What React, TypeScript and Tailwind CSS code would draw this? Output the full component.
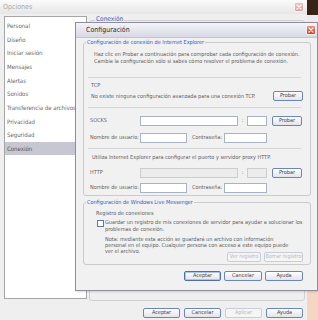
import React from "react";

type BtnProps = { label: string; w: string; disabled?: boolean; def?: boolean };

function Btn({ label, w, disabled = false, def = false }: BtnProps) {
  const base =
    "flex items-center justify-center h-[10px] rounded-[2px] border text-[5.5px] leading-none shrink-0 whitespace-nowrap ";
  const look = disabled
    ? "border-[#c9cdd6] bg-[#f5f5f5] text-[#b8b8b8]"
    : def
    ? "border-[#4f6fa8] bg-linear-to-b from-[#ffffff] to-[#e3e3ea] text-[#444] shadow-[inset_0_0_0_1px_#a9c6f2]"
    : "border-[#6a86b8] bg-linear-to-b from-[#ffffff] to-[#e3e3ea] text-[#444]";
  return <div className={base + w + " " + look}>{label}</div>;
}

function Input({ w, disabled = false }: { w: string; disabled?: boolean }) {
  return (
    <div
      className={
        "h-[10px] border shrink-0 " +
        w +
        (disabled ? " bg-[#ececec] border-[#cdcdcd]" : " bg-white border-[#aab3c4]")
      }
    />
  );
}

function Sep() {
  return <div className="h-px bg-[#d6d6d6] ml-[-2px] mr-[2px]" />;
}

function CloseX({ active }: { active: boolean }) {
  return (
    <div
      className={
        "w-[10px] h-[10px] rounded-[2px] flex items-center justify-center border " +
        (active
          ? "bg-linear-to-b from-[#ef8a74] to-[#cf3a22] border-[#f4f4f4]"
          : "bg-linear-to-b from-[#f1c0bc] to-[#e49c96] border-[#f6f6f6]")
      }
    >
      <svg width="6" height="6" viewBox="0 0 6 6">
        <path d="M1 1 L5 5 M5 1 L1 5" stroke="#ffffff" strokeWidth="1.2" strokeLinecap="round" />
      </svg>
    </div>
  );
}

const items = [
  "Personal",
  "Diseño",
  "Iniciar sesión",
  "Mensajes",
  "Alertas",
  "Sonidos",
  "Transferencia de archivos",
  "Privacidad",
  "Seguridad",
  "Conexión",
];

function UserRow({ mt }: { mt: string }) {
  return (
    <div className={mt + " h-[11px] flex items-center"}>
      <span className="w-[50px] shrink-0 whitespace-nowrap">Nombre de usuario:</span>
      <Input w="w-[47px]" />
      <span className="ml-[5px] w-[32px] shrink-0 whitespace-nowrap">Contraseña:</span>
      <Input w="w-[43px]" />
    </div>
  );
}

export default function App() {
  return (
    <div className="relative w-[318px] h-[320px] overflow-hidden font-['DejaVu_Sans_Condensed','DejaVu_Sans',sans-serif] bg-[linear-gradient(to_bottom,#3a2416_0,#3a2416_15px,#ececf0_15px,#ececf0_290px,#f5d6c2_290px)]">
      {/* Outer window: Opciones */}
      <div className="absolute left-0 top-0 w-[307px] h-[320px] bg-[#efefef] flex flex-col">
        <div className="h-[14px] shrink-0 flex items-center justify-between pl-[3px] pr-[3px] bg-linear-to-b from-[#fbfbfb] to-[#e6e6e6]">
          <span className="text-[7px] text-[#a9a9a9] leading-none">Opciones</span>
          <CloseX active={false} />
        </div>
        <div className="flex pl-[4px] mt-[2px] gap-[2px]">
          <div className="w-[83px] h-[283px] bg-white border border-[#a6a6a6] pt-[1.5px]">
            {items.map((it) => (
              <div
                key={it}
                className={
                  "h-[13.7px] flex items-center pl-[2px] text-[6px] whitespace-nowrap " +
                  (it === "Conexión" ? "bg-[#c7c7d1] text-[#555]" : "text-[#666]")
                }
              >
                {it}
              </div>
            ))}
          </div>
          <div className="relative w-[216px] h-[281px] mt-[4px] border border-[#cfcfcf] rounded-[3px]">
            <span className="absolute left-[5px] top-[-5px] px-[1px] bg-[#efefef] text-[6.5px] leading-none text-[#2f55c4]">
              Conexión
            </span>
          </div>
        </div>
        <div className="flex justify-end gap-[4px] pr-[4px] mt-[7px]">
          <Btn label="Aceptar" w="w-[37px]" />
          <Btn label="Cancelar" w="w-[37px]" />
          <Btn label="Aplicar" w="w-[37px]" disabled />
          <Btn label="Ayuda" w="w-[37px]" />
        </div>
      </div>

      {/* Dialog: Configuración */}
      <div className="absolute left-[75px] top-[22px] w-[243px] h-[269px] bg-[#f1f1f1] border border-[#8d8d9b] flex flex-col shadow-[1px_1px_2px_rgba(0,0,0,0.15)]">
        <div className="h-[15px] shrink-0 flex items-center justify-between pl-[10px] pr-[1px] bg-linear-to-b from-[#f3f3f8] to-[#d9d9e4] border-b border-[#c4c4d0]">
          <span className="text-[7px] leading-none text-[#2a2a2a]">Configuración</span>
          <CloseX active />
        </div>
        <div className="flex flex-col pl-[7px] pr-[6px] pt-[4px] text-[5.5px] text-[#5e5e5e]">
          {/* Group 1 */}
          <div className="relative border border-[#cacaca] rounded-[3px] pl-[6px] pr-[7px] pb-[2px] flex flex-col">
            <span className="absolute left-[2px] top-[-4px] px-[1px] bg-[#f1f1f1] leading-[7px] text-[#3159c8]">
              Configuración de conexión de Internet Explorer
            </span>
            <div className="pt-[8px] pl-[4px] leading-[7px]">
              Haz clic en Probar a continuación para comprobar cada configuración de conexión.
              <br />
              Cambia la configuración sólo si sabes cómo resolver el problema de conexión.
            </div>
            <div className="mt-[12px]">
              <Sep />
            </div>
            <div className="mt-[4px] leading-[7px] pl-[1px]">TCP</div>
            <div className="mt-[2px] h-[10px] flex items-center">
              <span className="flex-1 pl-[1px]">No existe ninguna configuración avanzada para una conexión TCP.</span>
              <Btn label="Probar" w="w-[30px]" />
            </div>
            <div className="mt-[6px]">
              <Sep />
            </div>
            <div className="mt-[7px] h-[11px] flex items-center">
              <span className="w-[50px] shrink-0">SOCKS</span>
              <Input w="w-[98px]" />
              <span className="w-[9px] text-center">:</span>
              <Input w="w-[20px]" />
              <div className="ml-[5px]">
                <Btn label="Probar" w="w-[30px]" />
              </div>
            </div>
            <UserRow mt="mt-[6px]" />
            <div className="mt-[5px]">
              <Sep />
            </div>
            <div className="mt-[5px] leading-[7px] pl-[2px]">
              Utiliza Internet Explorer para configurar el puerto y servidor proxy HTTP.
            </div>
            <div className="mt-[6px] h-[11px] flex items-center">
              <span className="w-[50px] shrink-0">HTTP</span>
              <Input w="w-[98px]" disabled />
              <span className="w-[9px] text-center">:</span>
              <Input w="w-[20px]" disabled />
              <div className="ml-[5px]">
                <Btn label="Probar" w="w-[30px]" />
              </div>
            </div>
            <UserRow mt="mt-[4px]" />
          </div>

          {/* Group 2 */}
          <div className="relative mt-[6px] border border-[#cacaca] rounded-[3px] pl-[12px] pr-[7px] pb-[2px] flex flex-col">
            <span className="absolute left-[2px] top-[-4px] px-[1px] bg-[#f1f1f1] leading-[7px] text-[#3159c8]">
              Configuración de Windows Live Messenger
            </span>
            <div className="pt-[7px] leading-[7px]">Registro de conexiones</div>
            <div className="mt-[2px] flex items-start gap-[1px]">
              <div className="ml-[1px] mt-[0.5px] w-[7px] h-[7px] shrink-0 bg-white border border-[#5b79ad]" />
              <div className="leading-[7px]">
                Guardar un registro de mis conexiones de servidor para ayudar a solucionar los
                <br />
                problemas de conexión.
              </div>
            </div>
            <div className="mt-[3px] pl-[9px] leading-[6px]">
              Nota: mediante esta acción se guardará un archivo con información
              <br />
              personal en el equipo. Cualquier persona con acceso a este equipo puede
              <br />
              ver el archivo.
            </div>
            <div className="mt-[-2px] flex justify-end gap-[3px]">
              <Btn label="Ver registro" w="w-[34px]" disabled />
              <Btn label="Borrar registro" w="w-[39px]" disabled />
            </div>
          </div>

          <div className="mt-[6px] flex justify-end gap-[3px] pr-[8px]">
            <Btn label="Aceptar" w="w-[37px]" def />
            <Btn label="Cancelar" w="w-[38px]" />
            <Btn label="Ayuda" w="w-[38px]" />
          </div>
        </div>
      </div>
    </div>
  );
}
